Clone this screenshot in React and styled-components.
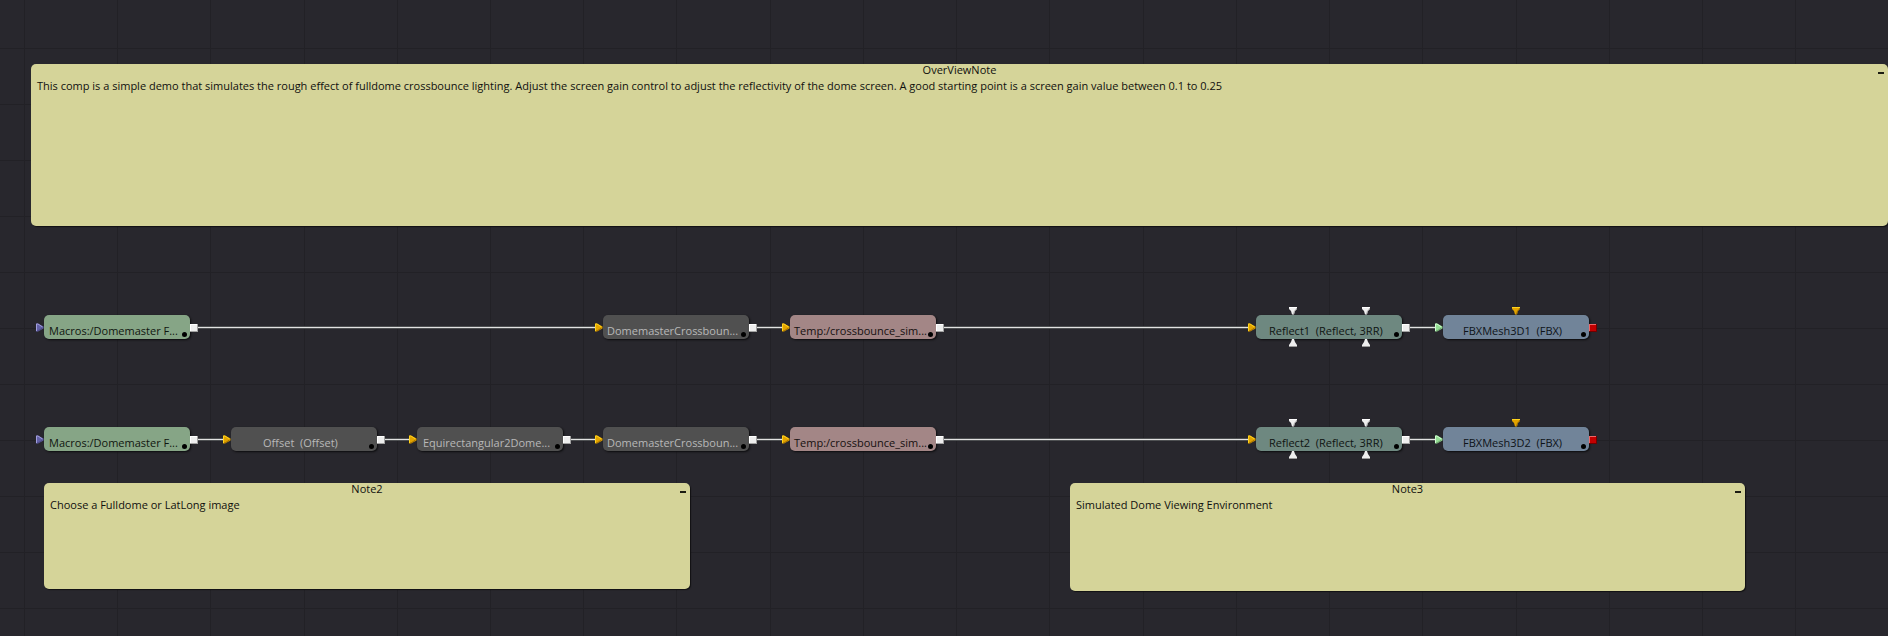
import React from 'react';
import styled, { createGlobalStyle } from 'styled-components';

const GlobalStyle = createGlobalStyle`
  body { margin: 0; background: #28272d; overflow: hidden; }
`;

const Canvas = styled.main`
  position: relative;
  width: 1888px;
  height: 636px;
  overflow: hidden;
  background: #28272d;
  font: 11px/15px 'Open Sans', 'Noto Sans', sans-serif;
  color: #10100e;
`;

const Drawing = styled.svg`
  position: absolute;
  inset: 0;
  display: block;
`;

const NoteBox = styled.section`
  position: absolute;
  left: ${(p) => p.$x}px;
  top: ${(p) => p.$y}px;
  width: ${(p) => p.$w}px;
  height: ${(p) => p.$h}px;
  border-radius: 5px;
  background: #d5d499;
  box-shadow: 1px 1px 1px #111113;
`;

const NoteTitle = styled.header`
  height: 13px;
  line-height: 11px;
  text-align: center;
`;

const NoteText = styled.p`
  margin: 0;
  padding: 0 6px;
  line-height: 17px;
  white-space: nowrap;
`;

const Collapse = styled.i`
  position: absolute;
  right: 4px;
  top: 8px;
  width: 6px;
  height: 2px;
  background: #1c1c12;
`;

const TOOL_COLORS = {
  green: ['#86a586', '#10160f'],
  gray: ['#505050', '#b8b8b8'],
  rose: ['#a38686', '#161010'],
  teal: ['#6e8880', '#0e1412'],
  blue: ['#718499', '#0e1318'],
};

const Tool = styled.div`
  position: absolute;
  left: ${(p) => p.$x}px;
  top: ${(p) => p.$y}px;
  width: 146px;
  height: 24px;
  border-radius: 5px;
  background: ${(p) => TOOL_COLORS[p.$tone][0]};
  color: ${(p) => TOOL_COLORS[p.$tone][1]};
  box-shadow: 1px 1px 2px #0c0c0e;
`;

const ToolLabel = styled.span`
  display: block;
  box-sizing: border-box;
  padding-left: ${(p) => p.$inset}px;
  line-height: 31px;
  white-space: pre;
`;

const StatusDot = styled.i`
  position: absolute;
  right: 3px;
  bottom: 2px;
  width: 5px;
  height: 5px;
  border-radius: 50%;
  background: #000;
`;

const GRID_X = [24, 117, 210, 304, 397, 490, 583, 676, 770, 863, 956, 1049, 1143, 1236, 1329, 1422, 1516, 1609, 1702, 1795];
const GRID_Y = [48, 104, 160, 216, 272, 328, 384, 440, 496, 552, 608];

const NOTES = [
  { x: 31, y: 64, w: 1857, h: 162, title: 'OverViewNote', text: 'This comp is a simple demo that simulates the rough effect of fulldome crossbounce lighting. Adjust the screen gain control to adjust the reflectivity of the dome screen. A good starting point is a screen gain value between 0.1 to 0.25' },
  { x: 44, y: 483, w: 646, h: 106, title: 'Note2', text: 'Choose a Fulldome or LatLong image' },
  { x: 1070, y: 483, w: 675, h: 108, title: 'Note3', text: 'Simulated Dome Viewing Environment' },
];

const flow = (n, y, withConversion) => [
  { x: 44, y, tone: 'green', inset: 5, input: 'violet', label: 'Macros:/Domemaster F...' },
  ...(withConversion
    ? [
        { x: 231, y, tone: 'gray', inset: 32, input: 'yellow', label: 'Offset  (Offset)' },
        { x: 417, y, tone: 'gray', inset: 6, input: 'yellow', label: 'Equirectangular2Dome...' },
      ]
    : []),
  { x: 603, y, tone: 'gray', inset: 4, input: 'yellow', label: 'DomemasterCrossboun...' },
  { x: 790, y, tone: 'rose', inset: 4, input: 'yellow', label: 'Temp:/crossbounce_sim...' },
  { x: 1256, y, tone: 'teal', inset: 13, input: 'yellow', label: `Reflect${n}  (Reflect, 3RR)`, masks: true },
  { x: 1443, y, tone: 'blue', inset: 20, input: 'green', label: `FBXMesh3D${n}  (FBX)`, material: true, end: true },
];

const ROWS = [flow(1, 315, false), flow(2, 427, true)];

const PORT = {
  violet: ['#6260a6', '#a29fdc', '#424079'],
  yellow: ['#e2a300', '#ffd31c', '#865900'],
  green: ['#93dc93', '#d0ffd0', '#598459'],
  white: ['#eeeeee', '#ffffff', '#999999'],
};

function RightPort({ x, y, tone }) {
  const [fill, light, dark] = PORT[tone];
  return (
    <g>
      <path d={`M${x} ${y - 0.5}h2l5.5 3v2l-5.5 3h-2z`} fill={fill} />
      <path d={`M${x + 0.5} ${y + 7}v-7h1.5l4.5 3`} fill="none" stroke={light} />
      <path d={`M${x + 1} ${y + 7}h1l4.5-3`} fill="none" stroke={dark} strokeWidth="0.7" />
    </g>
  );
}

function VerticalPort({ x, y, tone, up }) {
  const [fill, light, dark] = PORT[tone];
  return up ? (
    <g>
      <path d={`M${x + 3} ${y}h2l1 3 2 3v2h-8v-2l2-3z`} fill={fill} />
      <path d={`M${x} ${y + 7.5}h8`} stroke={dark} />
    </g>
  ) : (
    <g>
      <path d={`M${x} ${y}h8v2l-2 2-1 3.5h-2l-1-3.5-2-2z`} fill={fill} />
      <path d={`M${x} ${y + 0.5}h8`} stroke={light} />
      <path d={`M${x + 7.5} ${y + 1}v1l-2 2-1 3`} fill="none" stroke={dark} strokeWidth="0.7" />
    </g>
  );
}

function OutputPort({ x, y, end }) {
  return (
    <g shapeRendering="crispEdges">
      <rect x={x} y={y} width="8" height="8" fill={end ? '#700000' : '#a2a2a2'} />
      <rect x={x} y={y} width="7" height="7" fill={end ? '#ee6666' : '#ffffff'} />
      <rect x={x + 1} y={y + 1} width="6" height="6" fill={end ? '#c20000' : '#eeeeee'} />
    </g>
  );
}

function Note({ x, y, w, h, title, text }) {
  return (
    <NoteBox $x={x} $y={y} $w={w} $h={h}>
      <NoteTitle>{title}</NoteTitle>
      <NoteText>{text}</NoteText>
      <Collapse />
    </NoteBox>
  );
}

export default function App() {
  return (
    <>
      <GlobalStyle />
      <Canvas>
        <Drawing width="1888" height="636" shapeRendering="crispEdges">
          {GRID_X.map((x) => <rect key={x} x={x} width="1" height="636" fill="#222126" />)}
          {GRID_Y.map((y) => <rect key={y} y={y} width="1888" height="1" fill="#222126" />)}
          {ROWS.map((row) => row.slice(1).map((tool, i) => (
            <g key={`${tool.x}-${tool.y}`}>
              <rect x={row[i].x + 154} y={tool.y + 11} width={tool.x - row[i].x - 162} height="3" fill="#4e5052" />
              <rect x={row[i].x + 154} y={tool.y + 12} width={tool.x - row[i].x - 162} height="1" fill="#e2e2e2" />
            </g>
          )))}
        </Drawing>
        {NOTES.map((note) => <Note key={note.title} {...note} />)}
        {ROWS.flat().map((tool) => (
          <Tool key={`${tool.x}-${tool.y}`} $x={tool.x} $y={tool.y} $tone={tool.tone}>
            <ToolLabel $inset={tool.inset}>{tool.label}</ToolLabel>
            <StatusDot />
          </Tool>
        ))}
        <Drawing width="1888" height="636">
          {ROWS.flat().map((tool) => (
            <g key={`${tool.x}-${tool.y}`}>
              <RightPort x={tool.x - 8} y={tool.y + 9} tone={tool.input} />
              <OutputPort x={tool.x + 146} y={tool.y + 9} end={tool.end} />
              {tool.masks && [33, 106].map((dx) => (
                <g key={dx}>
                  <VerticalPort x={tool.x + dx} y={tool.y - 8} tone="white" />
                  <VerticalPort x={tool.x + dx} y={tool.y + 24} tone="white" up />
                </g>
              ))}
              {tool.material && <VerticalPort x={tool.x + 69} y={tool.y - 8} tone="yellow" />}
            </g>
          ))}
        </Drawing>
      </Canvas>
    </>
  );
}
